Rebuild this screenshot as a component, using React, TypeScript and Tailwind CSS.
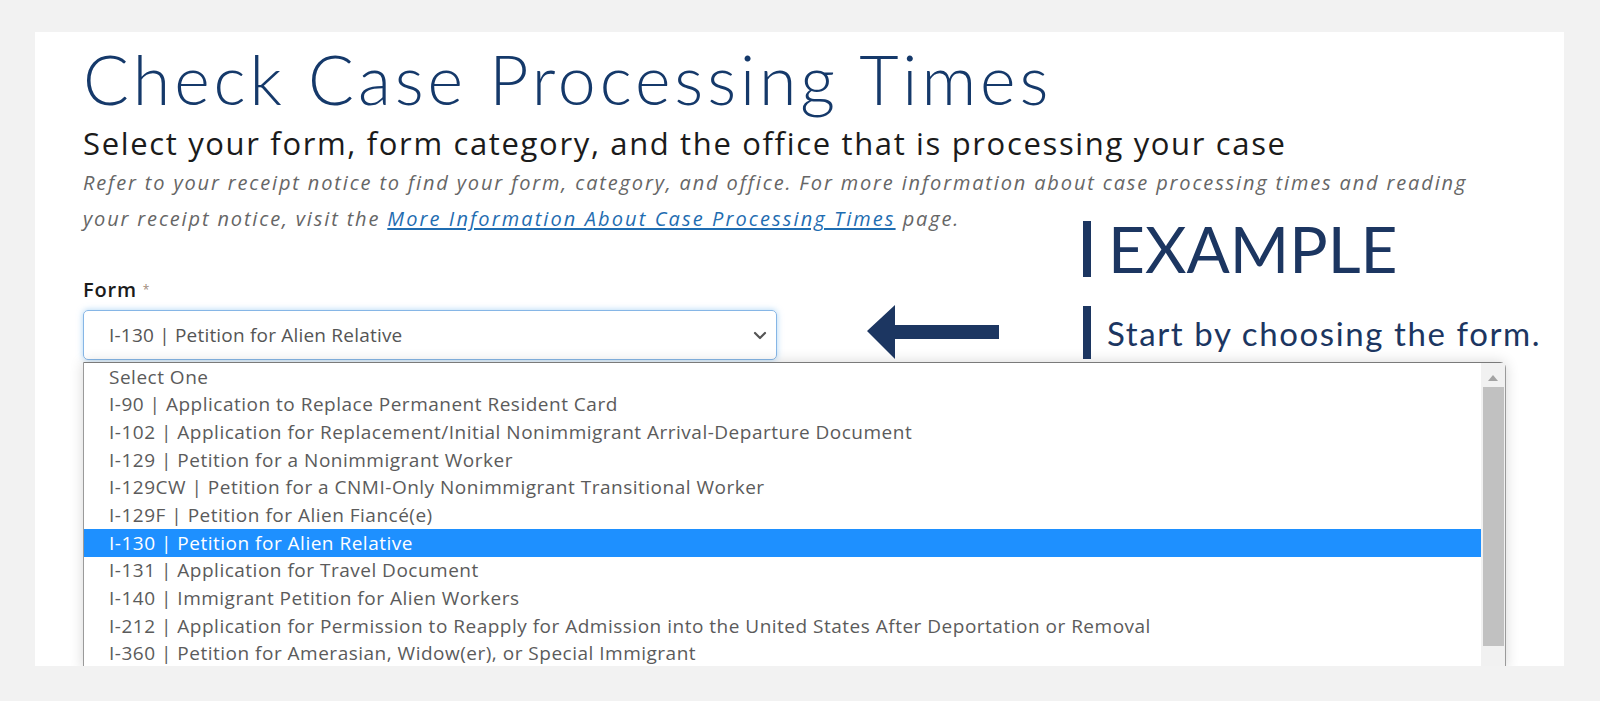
const forms = [
  "Select One",
  "I-90 | Application to Replace Permanent Resident Card",
  "I-102 | Application for Replacement/Initial Nonimmigrant Arrival-Departure Document",
  "I-129 | Petition for a Nonimmigrant Worker",
  "I-129CW | Petition for a CNMI-Only Nonimmigrant Transitional Worker",
  "I-129F | Petition for Alien Fiancé(e)",
  "I-130 | Petition for Alien Relative",
  "I-131 | Application for Travel Document",
  "I-140 | Immigrant Petition for Alien Workers",
  "I-212 | Application for Permission to Reapply for Admission into the United States After Deportation or Removal",
  "I-360 | Petition for Amerasian, Widow(er), or Special Immigrant",
];

const selected = "I-130 | Petition for Alien Relative";

const App = () => {
  return (
    <div className="w-full h-[701px] bg-[#f2f2f2] pt-[32px] pl-[35px] font-['Open_Sans',sans-serif]">
      <div className="relative w-[1529px] h-[634px] bg-white overflow-hidden pl-[48px] pt-[13px]">
        {/* Heading */}
        <h1 className="font-['Lato',sans-serif] text-[68px] leading-[68px] font-light text-[#15396a] tracking-[3.9px]">
          Check Case Processing Times
        </h1>
        <h2 className="mt-[12px] text-[31px] leading-[36px] text-[#1b1b1b] tracking-[1.65px]">
          Select your form, form category, and the office that is processing your case
        </h2>
        <p className="mt-[4px] text-[20px] leading-[36px] italic text-[#666] tracking-[1.85px] whitespace-nowrap">
          Refer to your receipt notice to find your form, category, and office. For more information about case
          processing times and reading
          <br />
          your receipt notice, visit the{" "}
          <a href="#" className="text-[#1f6db1] underline underline-offset-2 tracking-[2.1px]">
            More Information About Case Processing Times
          </a>{" "}
          page.
        </p>

        {/* Form select */}
        <label className="block mt-[41px] text-[20px] leading-[24px] font-semibold text-[#1b1b1b] tracking-[0.8px]">
          Form <span className="align-top text-[12px] font-normal text-[#a08a7a]">*</span>
        </label>
        <div className="mt-[8px] w-[694px] h-[50px] rounded-[5px] border border-[#86b6e6] shadow-[0_0_6px_rgba(102,175,233,0.55)] flex items-center justify-between pl-[25px] pr-[9px]">
          <span className="text-[19px] text-[#555] tracking-[0.2px]">{selected}</span>
          <svg width="14" height="9" viewBox="0 0 14 9" fill="none">
            <path d="M2 2l5 5 5-5" stroke="#555" strokeWidth="2.2" strokeLinecap="round" strokeLinejoin="round" />
          </svg>
        </div>

        {/* Open dropdown list */}
        <div className="absolute left-[48px] top-[330px] w-[1423px] bg-white border border-[#9a9a9a] border-t-[#7a7a7a] rounded-tr-[6px] shadow-[0_0_14px_rgba(0,0,0,0.16)] flex">
          <ul className="flex-1">
            {forms.map((f) => (
              <li
                key={f}
                className={
                  f === selected
                    ? "h-[27.7px] flex items-center pl-[25px] text-[19px] tracking-[0.5px] bg-[#1e90ff] text-white"
                    : "h-[27.7px] flex items-center pl-[25px] text-[19px] tracking-[0.5px] text-[#5b5b5b]"
                }
              >
                {f}
              </li>
            ))}
          </ul>
          <div className="w-[24px] bg-[#f1f1f1] flex flex-col items-center">
            <svg width="10" height="6" viewBox="0 0 10 6" className="mt-[12px]">
              <path d="M0 6L5 0l5 6z" fill="#a3a3a3" />
            </svg>
            <div className="mt-[6px] w-[21px] h-[259px] bg-[#c1c1c1]" />
          </div>
        </div>

        {/* Annotation */}
        <svg className="absolute left-[832px] top-[273px]" width="132" height="54" viewBox="0 0 132 54">
          <polygon points="0,26 28,0 28,20 132,20 132,34 28,34 28,54" fill="#1c3661" />
        </svg>
        <div className="absolute left-[1048px] top-[189px] flex items-center gap-[17px] font-['Lato',sans-serif] text-[#1c3661]">
          <div className="w-[8px] h-[56px] bg-[#1c3661]" />
          <span className="text-[64px] leading-[56px]">EXAMPLE</span>
        </div>
        <div className="absolute left-[1048px] top-[274px] flex items-center gap-[16px] font-['Lato',sans-serif] text-[#1c3661]">
          <div className="w-[8px] h-[53px] bg-[#1c3661]" />
          <span className="text-[33px] leading-[40px] tracking-[1.6px]">Start by choosing the form.</span>
        </div>
      </div>
    </div>
  );
};

export default App;
